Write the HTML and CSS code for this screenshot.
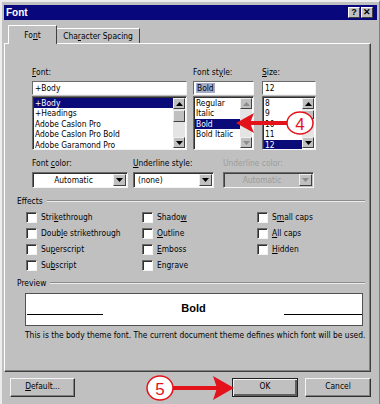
FILE: index.html
```html
<!DOCTYPE html>
<html lang="en">
<head>
<meta charset="UTF-8">
<title>Font</title>
<link rel="stylesheet" href="styles.css">
</head>
<body>

<div class="window">
    <div class="titlebar">
        <span class="title">Font</span>
        <div class="title-buttons">
            <span class="tbtn">?</span>
            <span class="tbtn">&#x2715;</span>
        </div>
    </div>

    <div class="tabs">
        <div class="tab active">Fo<u>n</u>t</div>
        <div class="tab">Cha<u>r</u>acter Spacing</div>
    </div>

    <div class="panel">
        <div class="font-row">
            <div class="field font-col">
                <label><u>F</u>ont:</label>
                <div class="textbox">+Body</div>
                <div class="listbox">
                    <ul class="items">
                        <li class="sel">+Body</li>
                        <li>+Headings</li>
                        <li>Adobe Caslon Pro</li>
                        <li>Adobe Caslon Pro Bold</li>
                        <li>Adobe Garamond Pro</li>
                    </ul>
                    <div class="scrollbar">
                        <span class="sb-btn"><svg width="7" height="4" viewBox="0 0 7 4"><polygon points="0,4 3.5,0 7,4" /></svg></span>
                        <span class="sb-track"><span class="sb-thumb"></span></span>
                        <span class="sb-btn"><svg width="7" height="4" viewBox="0 0 7 4"><polygon points="0,0 3.5,4 7,0" /></svg></span>
                    </div>
                </div>
            </div>

            <div class="field style-col">
                <label>Font st<u>y</u>le:</label>
                <div class="textbox"><span class="hl">Bold</span></div>
                <div class="listbox">
                    <ul class="items">
                        <li>Regular</li>
                        <li>Italic</li>
                        <li class="sel">Bold</li>
                        <li>Bold Italic</li>
                    </ul>
                    <div class="scrollbar disabled">
                        <span class="sb-btn"><svg width="7" height="4" viewBox="0 0 7 4"><polygon points="0,4 3.5,0 7,4" /></svg></span>
                        <span class="sb-track"></span>
                        <span class="sb-btn"><svg width="7" height="4" viewBox="0 0 7 4"><polygon points="0,0 3.5,4 7,0" /></svg></span>
                    </div>
                </div>
            </div>

            <div class="field size-col">
                <label><u>S</u>ize:</label>
                <div class="textbox">12</div>
                <div class="listbox">
                    <ul class="items">
                        <li>8</li>
                        <li>9</li>
                        <li>10</li>
                        <li>11</li>
                        <li class="sel">12</li>
                    </ul>
                    <div class="scrollbar">
                        <span class="sb-btn"><svg width="7" height="4" viewBox="0 0 7 4"><polygon points="0,4 3.5,0 7,4" /></svg></span>
                        <span class="sb-track"><span class="sb-thumb small"></span></span>
                        <span class="sb-btn"><svg width="7" height="4" viewBox="0 0 7 4"><polygon points="0,0 3.5,4 7,0" /></svg></span>
                    </div>
                </div>
            </div>
        </div>

        <div class="color-row">
            <div class="field color-col">
                <label>Font <u>c</u>olor:</label>
                <div class="combo">
                    <span class="combo-value center">Automatic</span>
                    <span class="combo-btn"><svg width="7" height="4" viewBox="0 0 7 4"><polygon points="0,0 3.5,4 7,0" /></svg></span>
                </div>
            </div>
            <div class="field uline-col">
                <label><u>U</u>nderline style:</label>
                <div class="combo">
                    <span class="combo-value">(none)</span>
                    <span class="combo-btn"><svg width="7" height="4" viewBox="0 0 7 4"><polygon points="0,0 3.5,4 7,0" /></svg></span>
                </div>
            </div>
            <div class="field ucolor-col disabled">
                <label>Underline color:</label>
                <div class="combo">
                    <span class="combo-value center">Automatic</span>
                    <span class="combo-btn"><svg width="7" height="4" viewBox="0 0 7 4"><polygon points="0,0 3.5,4 7,0" /></svg></span>
                </div>
            </div>
        </div>

        <div class="group-title">Effects</div>
        <div class="checks">
            <div class="check"><span class="box"></span>Stri<u>k</u>ethrough</div>
            <div class="check"><span class="box"></span>Shado<u>w</u></div>
            <div class="check"><span class="box"></span>S<u>m</u>all caps</div>
            <div class="check"><span class="box"></span>Doub<u>l</u>e strikethrough</div>
            <div class="check"><span class="box"></span><u>O</u>utline</div>
            <div class="check"><span class="box"></span><u>A</u>ll caps</div>
            <div class="check"><span class="box"></span>Su<u>p</u>erscript</div>
            <div class="check"><span class="box"></span><u>E</u>mboss</div>
            <div class="check"><span class="box"></span><u>H</u>idden</div>
            <div class="check"><span class="box"></span>Su<u>b</u>script</div>
            <div class="check"><span class="box"></span>En<u>g</u>rave</div>
        </div>

        <div class="group-title">Preview</div>
        <div class="preview">
            <span class="pv-line left"></span>
            <span class="pv-text">Bold</span>
            <span class="pv-line right"></span>
        </div>
        <p class="note">This is the body theme font. The current document theme defines which font will be used.</p>
    </div>

    <div class="buttons">
        <div class="btn"><u>D</u>efault...</div>
        <div class="spacer"></div>
        <div class="btn default">OK</div>
        <div class="btn">Cancel</div>
    </div>

    <!-- red callouts drawn over the dialog -->
    <svg class="callouts" width="380" height="404" viewBox="0 0 380 404">
        <line x1="250" y1="123" x2="288" y2="123" stroke="#e3121b" stroke-width="4" />
        <polygon points="236,123 254,113 250,123 254,133" fill="#e3121b" />
        <ellipse cx="300" cy="123" rx="13" ry="11" fill="#fff" stroke="#e3121b" stroke-width="1.5" />
        <text x="300" y="129.5" class="callout-num">4</text>

        <line x1="173" y1="388" x2="218" y2="388" stroke="#e3121b" stroke-width="4" />
        <polygon points="234,388 213,376 217,388 213,400" fill="#e3121b" />
        <ellipse cx="160" cy="388" rx="13" ry="12" fill="#fff" stroke="#e3121b" stroke-width="1.5" />
        <text x="160" y="394.5" class="callout-num">5</text>
    </svg>
</div>

</body>
</html>
```

FILE: styles.css
```css
* {
    box-sizing: border-box;
}
body {
    margin: 0;
    background: #fff;
    font-family: "DejaVu Sans Condensed", "Liberation Sans", Arial, sans-serif;
    font-size: 8.4px;
    color: #000;
}
u {
    text-decoration-thickness: 1px;
    text-underline-offset: 1px;
}
.window {
    position: relative;
    width: 380px;
    height: 404px;
    background: #c0c0c0;
    border-top: 2px solid #ececec;
    border-left: 2px solid #ececec;
    border-right: 1px solid #808080;
    padding: 3px 2px 0 2px;
}

/* title bar */
.titlebar {
    height: 15px;
    background: #08087c;
    display: flex;
    align-items: center;
    justify-content: space-between;
    padding: 0 4px 0 2px;
}
.title {
    color: #fff;
    font-family: "Liberation Sans", Arial, sans-serif;
    font-weight: bold;
    font-size: 10px;
}
.title-buttons {
    display: flex;
    gap: 1px;
}
.tbtn {
    width: 12px;
    height: 11px;
    background: #c0c0c0;
    border: 1px solid;
    border-color: #fff #404040 #404040 #fff;
    font-family: "Liberation Sans", Arial, sans-serif;
    font-weight: bold;
    font-size: 9px;
    line-height: 9px;
    text-align: center;
}

/* tabs */
.tabs {
    display: flex;
    align-items: flex-end;
    height: 18px;
    margin-top: 5px;
    padding-left: 4px;
}
.tab {
    height: 15px;
    padding-top: 2px;
    text-align: center;
    border-top: 1px solid #fff;
    border-right: 1px solid #404040;
    width: 83px;
}
.tab.active {
    position: relative;
    z-index: 2;
    width: 49px;
    height: 19px;
    margin-bottom: -1px;
    padding-top: 4px;
    background: #c0c0c0;
    border-left: 1px solid #fff;
}

/* main panel */
.panel {
    position: relative;
    width: 367px;
    height: 329px;
    border: 1px solid;
    border-color: #fff #404040 #404040 #fff;
    box-shadow: inset -1px -1px 0 #808080;
}
.font-row {
    display: flex;
    padding: 23px 0 0 27px;
}
.field label {
    display: block;
    height: 10px;
    line-height: 10px;
    margin-bottom: 4px;
}
.font-col { width: 155px; margin-right: 6px; }
.style-col { width: 61px; margin-right: 8px; }
.size-col { width: 54px; }

.textbox {
    height: 14px;
    line-height: 12px;
    padding-left: 2px;
    background: #fff;
    border: 1px solid;
    border-color: #6a6a6a #f4f4f4 #f4f4f4 #6a6a6a;
}
.hl {
    background: #a3abc9;
    padding: 0 1px;
}
.listbox {
    display: flex;
    height: 54px;
    margin-top: 1px;
    background: #fff;
    border: 1px solid;
    border-color: #6a6a6a #f4f4f4 #f4f4f4 #6a6a6a;
    box-shadow: inset 1px 1px 0 #303030;
}
.items {
    flex: 1;
    list-style: none;
    margin: 0;
    padding: 1px 0 0 1px;
    overflow: hidden;
}
.items li {
    height: 10.4px;
    line-height: 10.4px;
    padding-left: 1px;
    white-space: nowrap;
}
.items li.sel {
    background: #0a0a78;
    color: #fff;
}
.scrollbar {
    width: 13px;
    display: flex;
    flex-direction: column;
    padding: 1px 1px 1px 0;
}
.sb-btn {
    height: 11px;
    display: flex;
    align-items: center;
    justify-content: center;
    background: #c0c0c0;
    border: 1px solid;
    border-color: #f0f0f0 #404040 #404040 #f0f0f0;
}
.sb-btn svg {
    fill: #000;
}
.scrollbar.disabled .sb-btn svg {
    fill: #8c8c8c;
}
.sb-track {
    flex: 1;
    background: #e4e4e4;
    padding-top: 1px;
}
.sb-thumb {
    display: block;
    height: 12px;
    background: #c0c0c0;
    border: 1px solid;
    border-color: #f0f0f0 #404040 #404040 #f0f0f0;
}
.sb-thumb.small {
    height: 9px;
}

/* colour row */
.color-row {
    display: flex;
    padding: 8px 0 0 27px;
}
.color-col { width: 96px; margin-right: 5px; }
.uline-col { width: 81px; margin-right: 9px; }
.ucolor-col { width: 91px; }
.combo {
    display: flex;
    height: 16px;
    background: #fff;
    border: 1px solid;
    border-color: #6a6a6a #f4f4f4 #f4f4f4 #6a6a6a;
    box-shadow: inset 1px 1px 0 #303030;
    padding: 1px 1px 1px 1px;
}
.combo-value {
    flex: 1;
    line-height: 12px;
    padding-left: 3px;
}
.combo-value.center {
    text-align: center;
    padding-left: 0;
}
.combo-btn {
    width: 13px;
    display: flex;
    align-items: center;
    justify-content: center;
    background: #c0c0c0;
    border: 1px solid;
    border-color: #f0f0f0 #404040 #404040 #f0f0f0;
}
.disabled label,
.disabled .combo-value {
    color: #9c9c9c;
}
.disabled .combo {
    background: #c0c0c0;
    box-shadow: inset 1px 1px 0 #404040;
}
.disabled .combo-btn svg {
    fill: #8c8c8c;
}

/* group titles with etched rule */
.group-title {
    display: flex;
    align-items: center;
    height: 10px;
    line-height: 10px;
    margin-top: 8px;
    padding: 0 5px 0 12px;
}
.group-title::after {
    content: "";
    flex: 1;
    margin-left: 4px;
    border-top: 1px solid #8c8c8c;
    border-bottom: 1px solid #ececec;
}

/* checkboxes */
.checks {
    display: grid;
    grid-template-columns: 116px 115px 1fr;
    grid-auto-rows: 16px;
    margin-top: 3px;
    padding-left: 21px;
}
.check {
    display: flex;
    align-items: center;
    white-space: nowrap;
}
.box {
    width: 11px;
    height: 11px;
    margin-right: 4px;
    background: #fff;
    border: 1px solid;
    border-color: #6a6a6a #f4f4f4 #f4f4f4 #6a6a6a;
    box-shadow: inset 1px 1px 0 #303030;
}

/* preview */
.checks + .group-title {
    margin-top: 5px;
}
.preview {
    display: flex;
    justify-content: space-between;
    align-items: flex-start;
    width: 338px;
    height: 33px;
    margin: 5px 0 0 20px;
    background: #fff;
    border: 1px solid #505050;
}
.pv-line {
    height: 1px;
    margin-top: 20px;
    background: #000;
}
.pv-line.left {
    width: 76px;
    margin-left: 1px;
}
.pv-line.right {
    width: 78px;
}
.pv-text {
    margin-top: 8px;
    font-family: "Liberation Sans", Arial, sans-serif;
    font-weight: bold;
    font-size: 11px;
    line-height: 13px;
}
.note {
    margin: 4px 0 0 20px;
    line-height: 10px;
    white-space: nowrap;
}

/* bottom buttons */
.buttons {
    display: flex;
    margin-top: 6px;
    padding-left: 6px;
    width: 367px;
}
.spacer {
    flex: 1;
}
.btn {
    width: 66px;
    height: 19px;
    line-height: 15px;
    text-align: center;
    background: #c0c0c0;
    border: 1px solid;
    border-color: #f4f4f4 #303030 #303030 #f4f4f4;
    box-shadow: inset -1px -1px 0 #808080;
}
.btn:first-child {
    width: 65px;
}
.btn.default {
    margin-right: 7px;
    border: 1px solid #202020;
    box-shadow: inset 1px 1px 0 #f4f4f4, inset -2px -2px 0 #606060;
}

/* callouts */
.callouts {
    position: absolute;
    top: 0;
    left: 0;
    margin: -2px 0 0 -2px;
    pointer-events: none;
}
.callout-num {
    fill: #e3121b;
    font-family: "Liberation Sans", Arial, sans-serif;
    font-size: 17px;
    text-anchor: middle;
}
```
